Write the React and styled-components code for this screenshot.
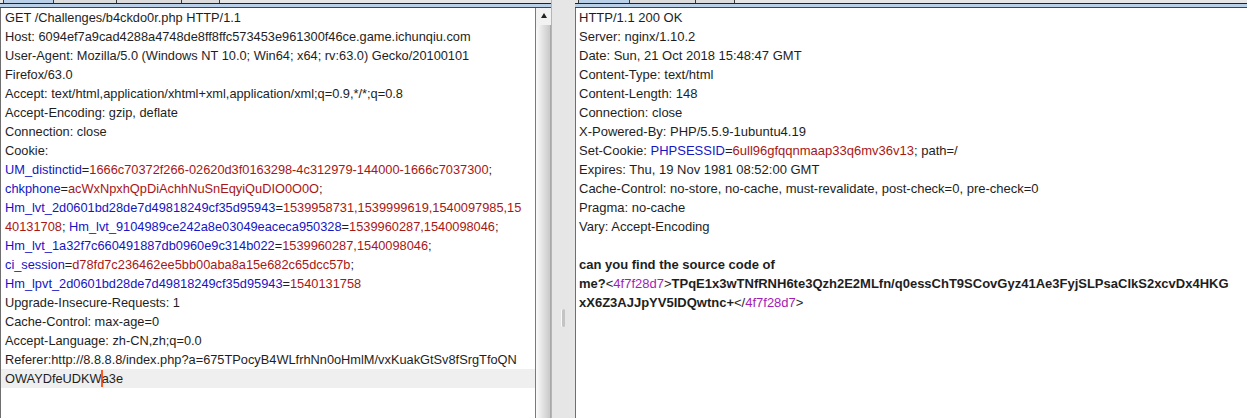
import styled, { createGlobalStyle } from 'styled-components';

const Global = createGlobalStyle`
  html, body { margin: 0; padding: 0; background: #e6e6e6; }
  body { font-family: "Liberation Sans", Arial, sans-serif; }
`;

const Frame = styled.div`
  display: flex;
  width: 1247px;
  height: 418px;
  overflow: hidden;
`;

const Pane = styled.div`
  display: flex;
  flex-direction: column;
  width: ${(p) => p.$w || 'auto'};
  flex: ${(p) => (p.$w ? '0 0 auto' : '1 1 auto')};
  min-width: 0;
`;

const TabRow = styled.div`
  display: flex;
  height: 3px;
  padding-left: 3px;
  background: #e6e6e6;
`;

const Tab = styled.div`
  width: ${(p) => p.$w}px;
  box-sizing: border-box;
  border-left: 1px solid #3a3a3a;
  border-right: ${(p) => (p.$last ? '1px solid #3a3a3a' : 'none')};
  background: ${(p) => (p.$active ? '#b9d0e8' : '#dcdcdc')};
`;

const Band = styled.div`
  height: 3px;
  border-top: 1px solid #222;
  border-bottom: 1px solid #444;
  background: #b9d0e8;
`;

const Body = styled.div`
  flex: 1;
  display: flex;
  min-height: 0;
  background: #fff;
  border-left: 1px solid #6f6f6f;
`;

const Editor = styled.div`
  flex: 1;
  min-width: 0;
  overflow: hidden;
  font-size: ${(p) => p.$size}px;
  line-height: 19px;
  color: #1e1e1e;
  white-space: pre;
`;

const Line = styled.div`
  padding-left: ${(p) => p.$pad}px;
  height: 19px;
  background: ${(p) => (p.$hl ? '#efefef' : 'transparent')};
  font-weight: ${(p) => (p.$bold ? 700 : 400)};
`;

const Key = styled.span`
  color: #1515c4;
`;

const Val = styled.span`
  color: #a81616;
`;

const TagName = styled.span`
  color: #a31bb5;
  font-weight: 400;
`;

const Plain = styled.span`
  font-weight: 400;
`;

const Caret = styled.span`
  display: inline-block;
  width: 2px;
  height: 17px;
  margin: 0 -1px;
  vertical-align: -4px;
  background: #ff5a1f;
`;

const ScrollBar = styled.div`
  width: 15px;
  flex: 0 0 15px;
  display: flex;
  flex-direction: column;
  border-left: 1px solid #7a7a7a;
  background: #f2f2f2;
`;

const Arrow = styled.div`
  height: 14px;
  display: flex;
  justify-content: center;
  align-items: center;
  &::after {
    content: '';
    border-left: 3px solid transparent;
    border-right: 3px solid transparent;
    border-bottom: 5px solid #222;
  }
`;

const Thumb = styled.div`
  flex: 1;
  margin-top: 3px;
  border-top-left-radius: 6px;
  border-right: 1px solid #a8a8a8;
  background: linear-gradient(to right, #fbfbfb 0%, #e4e4e4 45%, #c9c9c9 100%);
`;

const Divider = styled.div`
  width: 24px;
  flex: 0 0 24px;
  display: flex;
  justify-content: center;
  align-items: center;
  background: #e6e6e6;
  border-left: 1px solid #b5b5b5;
  box-sizing: border-box;
`;

const Grip = styled.div`
  width: 3px;
  height: 18px;
  margin-top: 218px;
  border-radius: 2px;
  background: #c4c4c4;
  box-shadow: -1px 0 0 #f8f8f8;
`;

const C = ({ k, v, tail = ';' }) => (
  <>
    <Key>{k}</Key>=<Val>{v}</Val>
    {tail}
  </>
);

const request = [
  'GET /Challenges/b4ckdo0r.php HTTP/1.1',
  'Host: 6094ef7a9cad4288a4748de8ff8ffc573453e961300f46ce.game.ichunqiu.com',
  'User-Agent: Mozilla/5.0 (Windows NT 10.0; Win64; x64; rv:63.0) Gecko/20100101',
  'Firefox/63.0',
  'Accept: text/html,application/xhtml+xml,application/xml;q=0.9,*/*;q=0.8',
  'Accept-Encoding: gzip, deflate',
  'Connection: close',
  'Cookie:',
  <C k="UM_distinctid" v="1666c70372f266-02620d3f0163298-4c312979-144000-1666c7037300" />,
  <C k="chkphone" v="acWxNpxhQpDiAchhNuSnEqyiQuDIO0O0O" />,
  <C k="Hm_lvt_2d0601bd28de7d49818249cf35d95943" v="1539958731,1539999619,1540097985,15" tail="" />,
  <>
    <Val>40131708</Val>; <C k="Hm_lvt_9104989ce242a8e03049eaceca950328" v="1539960287,1540098046" />
  </>,
  <C k="Hm_lvt_1a32f7c660491887db0960e9c314b022" v="1539960287,1540098046" />,
  <C k="ci_session" v="d78fd7c236462ee5bb00aba8a15e682c65dcc57b" />,
  <C k="Hm_lpvt_2d0601bd28de7d49818249cf35d95943" v="1540131758" tail="" />,
  'Upgrade-Insecure-Requests: 1',
  'Cache-Control: max-age=0',
  'Accept-Language: zh-CN,zh;q=0.0',
  'Referer:http://8.8.8.8/index.php?a=675TPocyB4WLfrhNn0oHmlM/vxKuakGtSv8fSrgTfoQN',
];

const response = [
  'HTTP/1.1 200 OK',
  'Server: nginx/1.10.2',
  'Date: Sun, 21 Oct 2018 15:48:47 GMT',
  'Content-Type: text/html',
  'Content-Length: 148',
  'Connection: close',
  'X-Powered-By: PHP/5.5.9-1ubuntu4.19',
  <>
    Set-Cookie: <C k="PHPSESSID" v="6ull96gfqqnmaap33q6mv36v13" />
    {' path=/'}
  </>,
  'Expires: Thu, 19 Nov 1981 08:52:00 GMT',
  'Cache-Control: no-store, no-cache, must-revalidate, post-check=0, pre-check=0',
  'Pragma: no-cache',
  'Vary: Accept-Encoding',
  '',
];

const Tag = ({ close }) => (
  <Plain>
    {close ? '</' : '<'}
    <TagName>4f7f28d7</TagName>&gt;
  </Plain>
);

export default function App() {
  return (
    <Frame>
      <Global />
      <Pane $w="551px">
        <TabRow>
          <Tab $active $w={50} />
          <Tab $w={63} />
          <Tab $w={65} />
          <Tab $w={39} $last />
        </TabRow>
        <Band />
        <Body>
          <Editor $size={12.8}>
            {request.map((l, i) => (
              <Line key={i} $pad={4}>{l}</Line>
            ))}
            <Line $pad={4} $hl>
              OWAYDfeUDKW<Caret />a3e
            </Line>
          </Editor>
          <ScrollBar>
            <Arrow />
            <Thumb />
          </ScrollBar>
        </Body>
      </Pane>
      <Divider>
        <Grip />
      </Divider>
      <Pane>
        <TabRow>
          <Tab $active $w={51} />
          <Tab $w={66} />
          <Tab $w={40} $last />
        </TabRow>
        <Band />
        <Body>
          <Editor $size={13}>
            {response.map((l, i) => (
              <Line key={i} $pad={3}>{l}</Line>
            ))}
            <Line $pad={3} $bold>can you find the source code of</Line>
            <Line $pad={3} $bold>
              me?<Tag />TPqE1x3wTNfRNH6te3Qzh2E2MLfn/q0essChT9SCovGyz41Ae3FyjSLPsaClkS2xcvDx4HKG
            </Line>
            <Line $pad={3} $bold>
              xX6Z3AJJpYV5IDQwtnc+<Tag close />
            </Line>
          </Editor>
        </Body>
      </Pane>
    </Frame>
  );
}
